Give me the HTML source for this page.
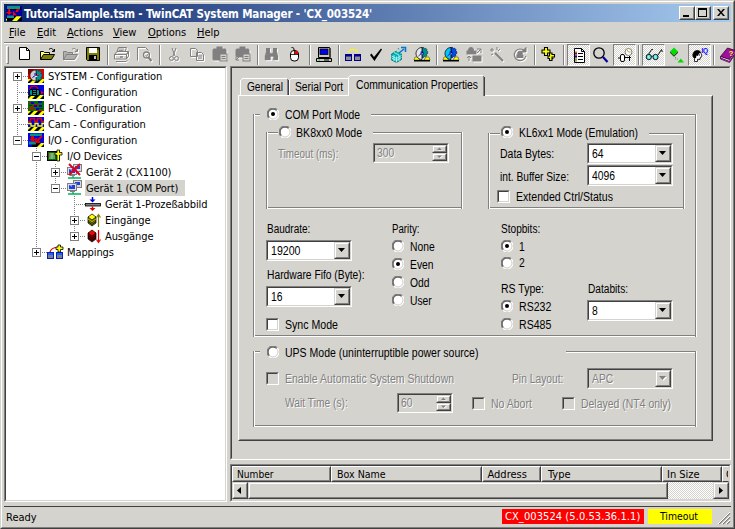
<!DOCTYPE html><html><head><meta charset="utf-8"><title>TwinCAT System Manager</title><style>
*{box-sizing:border-box;margin:0;padding:0}
html,body{width:735px;height:529px;overflow:hidden;background:#d5d3ce}
body{position:relative;font-family:"Liberation Sans",sans-serif;color:#000}
.a{position:absolute}
.ms{position:absolute;white-space:nowrap;font:12px/14px "Liberation Sans",sans-serif;transform:scaleX(.89);transform-origin:0 0}
.dis{color:#808080;text-shadow:1px 1px 0 #fff}
.th{position:absolute;white-space:nowrap;font:11px/13px "DejaVu Sans Condensed","Liberation Sans",sans-serif}
.th u{text-decoration:underline;text-decoration-thickness:1px;text-underline-offset:1px}
.hl{position:absolute;height:2px;border-top:1px solid #808080;border-bottom:1px solid #fff}
.vl{position:absolute;width:2px;border-left:1px solid #808080;border-right:1px solid #fff}
.sunk{position:absolute;border:1px solid;border-color:#808080 #fff #fff #808080}
.sunk>i{position:absolute;left:0;top:0;right:0;bottom:0;border:1px solid;border-color:#404040 #d5d3ce #d5d3ce #404040}
.btn{position:absolute;background:#d5d3ce;border:1px solid;border-color:#fff #404040 #404040 #fff}
.btn>i{position:absolute;left:0;top:0;right:0;bottom:0;border:1px solid;border-color:#d5d3ce #808080 #808080 #d5d3ce}
.btn2{position:absolute;background:#d5d3ce;border:1px solid;border-color:#d5d3ce #404040 #404040 #d5d3ce}
.btn2>i{position:absolute;left:0;top:0;right:0;bottom:0;border:1px solid;border-color:#fff #808080 #808080 #fff}
.rad{position:absolute;width:12px;height:12px}
.chk{position:absolute;width:13px;height:13px;background:#fff;border:1px solid;border-color:#808080 #fff #fff #808080}
.chk>i{position:absolute;left:0;top:0;right:0;bottom:0;border:1px solid;border-color:#404040 #d5d3ce #d5d3ce #404040}
.chk.d{background:#d5d3ce}
.cb{position:absolute;background:#fff;height:21px}
.cb.d{background:#d5d3ce}
.dot-h{position:absolute;height:1px;background-image:repeating-linear-gradient(90deg,#808080 0 1px,transparent 1px 2px)}
.dot-v{position:absolute;width:1px;background-image:repeating-linear-gradient(180deg,#808080 0 1px,transparent 1px 2px)}
.pm{position:absolute;width:9px;height:9px;border:1px solid #808080;background:#fff}
.pm:before{content:"";position:absolute;left:1px;top:3px;width:5px;height:1px;background:#000}
.pm.p:after{content:"";position:absolute;left:3px;top:1px;width:1px;height:5px;background:#000}
.tb{position:absolute;width:23px;height:22px;top:44px}
.tb.on{border:1px solid;border-color:#808080 #fff #fff #808080;background-image:repeating-conic-gradient(#fff 0 25%,#d5d3ce 0 50%);background-size:2px 2px}
.tb svg{position:absolute;left:3px;top:3px;width:16px;height:16px;overflow:visible}
.sep{position:absolute;top:45px;width:2px;height:20px;border-left:1px solid #808080;border-right:1px solid #fff}
svg{display:block}
</style></head><body>
<div class="a" style="left:0;top:0;width:735px;height:529px;border:1px solid;border-color:#d5d3ce #404040 #404040 #d5d3ce"></div>
<div class="a" style="left:1px;top:1px;width:733px;height:527px;border:1px solid;border-color:#fff #808080 #808080 #fff"></div>
<div class="a" style="left:4px;top:4px;width:727px;height:18px;background:linear-gradient(90deg,#0a246a,#a6caf0)"></div>
<svg class="a" style="left:6px;top:6px" width="16" height="15" viewBox="0 0 16 15"><rect width="16" height="15" fill="#0000a0"/><path d="M0 12h16v3H0z" fill="#000"/><rect x="2" y="1" width="13" height="3" fill="#000"/><rect x="1" y="0" width="13" height="3" fill="#109090"/><rect x="2" y="10" width="7" height="3" fill="#000"/><rect x="1" y="9.500" width="7" height="2.500" fill="#109090"/><path d="M2.300 3h1.900v3H6L3.200 9 0 6h2.300z" fill="#ff0000"/><path d="M10.500 3.300h3.700L11.500 6h-2zM7 5l4 4.300H7z" fill="#ff0000"/><path d="M10.500 10.300h5L11 15H6z" fill="#ffff00"/><path d="M0 12.500l1 .5v1.500l-1 .3z" fill="#ffff00"/></svg>
<div id="ttl" class="a" style="left:24px;top:6px;white-space:nowrap;color:#fff;font:bold 11.500px/16px 'DejaVu Sans Condensed','Liberation Sans',sans-serif;letter-spacing:-.14px">TutorialSample.tsm - TwinCAT System Manager - 'CX_003524'</div>
<div class="btn" style="left:679px;top:6px;width:16px;height:14px"><i></i><svg class="a" style="left:3px;top:8px" width="6" height="2"><rect width="6" height="2" fill="#000"/></svg></div>
<div class="btn" style="left:695px;top:6px;width:16px;height:14px"><i></i><svg class="a" style="left:2px;top:1px" width="9" height="9"><path d="M0 0h9v9H0zM1 2v6h7V2z" fill="#000" fill-rule="evenodd"/></svg></div>
<div class="btn" style="left:713px;top:6px;width:16px;height:14px"><i></i><svg class="a" style="left:3px;top:2px" width="8" height="7"><path d="M0 0h2l2 2.5L6 0h2L5 3.5 8 7H6L4 4.5 2 7H0l3-3.500z" fill="#000"/></svg></div>
<div class="th" style="left:9px;top:26px"><u>F</u>ile</div>
<div class="th" style="left:37px;top:26px"><u>E</u>dit</div>
<div class="th" style="left:67px;top:26px"><u>A</u>ctions</div>
<div class="th" style="left:113px;top:26px"><u>V</u>iew</div>
<div class="th" style="left:148px;top:26px"><u>O</u>ptions</div>
<div class="th" style="left:197px;top:26px"><u>H</u>elp</div>
<div class="hl" style="left:4px;top:42px;width:727px"></div>
<div class="a" style="left:6px;top:46px;width:3px;height:18px;border:1px solid;border-color:#fff #808080 #808080 #fff"></div>
<div class="tb" style="left:13px"><svg viewBox="0 0 16 16" style="left:3px;top:3px"><path d="M3.500 .5h7l3 3v9h-10z" fill="#fff" stroke="#000"/><path d="M10.500 .5v3h3" fill="none" stroke="#000"/></svg></div>
<div class="tb" style="left:36px"><svg viewBox="0 0 16 16" style="left:3px;top:3px"><g transform="translate(1,0)"><path d="M.5 12.500v-8h3l1 1h5v2" fill="#ffff80" stroke="#000"/><path d="M.5 12.500l3-5h11l-3 5z" fill="#808000" stroke="#000"/><path d="M9 2.500c2-2 4-1 4.500 1.500M14.500 2v2.500H12" fill="none" stroke="#000"/></g></svg></div>
<div class="tb" style="left:59px"><svg viewBox="0 0 16 16" style="left:3px;top:3px"><g transform="translate(1,0)"><g transform="translate(1,1)" fill="#fff" stroke="#fff" color="#fff"><path d="M.5 12.500v-8h3l1 1h5v2M.5 12.500l3-5h11l-3 5z" stroke-width="1" fill-opacity=".6"/><path d="M9 2.500c2-2 4-1 4.500 1.500M14.500 2v2.500H12" fill="none"/></g><g fill="#808080" stroke="#808080" color="#808080"><path d="M.5 12.500v-8h3l1 1h5v2M.5 12.500l3-5h11l-3 5z" stroke-width="1" fill-opacity=".6"/><path d="M9 2.500c2-2 4-1 4.500 1.500M14.500 2v2.500H12" fill="none"/></g></g></svg></div>
<div class="tb" style="left:82px"><svg viewBox="0 0 16 16" style="left:3px;top:3px"><path d="M1.500 .5h13v13h-12l-1-1z" fill="#808000" stroke="#000"/><rect x="4" y="1" width="8" height="5" fill="#fff"/><rect x="4" y="8" width="8" height="5" fill="#000"/><rect x="9" y="9" width="2" height="3" fill="#c0c0c0"/><rect x="12.500" y="1" width="1" height="2" fill="#000"/></svg></div>
<div class="sep" style="left:107px"></div>
<div class="tb" style="left:111px"><svg viewBox="0 0 16 16" style="left:3px;top:3px"><g transform="translate(1,1)" fill="#fff" stroke="#fff" color="#fff"><path d="M4.500 .5h8l-1.500 4h-8z" fill="none"/><path d="M5 2h5M4.500 3.500h5" fill="none" stroke-width=".8"/><path d="M.5 7.500l2.500-3h11.500l-2 3z" fill="none"/><path d="M.5 7.500h12v4.500h-12zM12.500 7.500l2-3v4.500l-2 3" fill="none"/><path d="M6 10h3" stroke-width="1.500"/><path d="M2 14.500h10l2-2" fill="none"/></g><g fill="#808080" stroke="#808080" color="#808080"><path d="M4.500 .5h8l-1.500 4h-8z" fill="none"/><path d="M5 2h5M4.500 3.500h5" fill="none" stroke-width=".8"/><path d="M.5 7.500l2.500-3h11.500l-2 3z" fill="none"/><path d="M.5 7.500h12v4.500h-12zM12.500 7.500l2-3v4.500l-2 3" fill="none"/><path d="M6 10h3" stroke-width="1.500"/><path d="M2 14.500h10l2-2" fill="none"/></g></svg></div>
<div class="tb" style="left:134px"><svg viewBox="0 0 16 16" style="left:3px;top:3px"><g transform="translate(1,1)" fill="#fff" stroke="#fff" color="#fff"><path d="M.5 13.500v-13h8l3 3" fill="none"/><circle cx="9.500" cy="8" r="3" fill="none" stroke-width="1.300"/><path d="M11.500 10.500l3 3.500" stroke-width="2"/><path d="M8.500 8l1 1.500 1.500-2.500" fill="none" stroke-width=".7"/></g><g fill="#808080" stroke="#808080" color="#808080"><path d="M.5 13.500v-13h8l3 3" fill="none"/><circle cx="9.500" cy="8" r="3" fill="none" stroke-width="1.300"/><path d="M11.500 10.500l3 3.500" stroke-width="2"/><path d="M8.500 8l1 1.500 1.500-2.500" fill="none" stroke-width=".7"/></g></svg></div>
<div class="sep" style="left:159px"></div>
<div class="tb" style="left:163px"><svg viewBox="0 0 16 16" style="left:3px;top:3px"><g transform="translate(1,1)" fill="#fff" stroke="#fff" color="#fff"><path d="M6 1l3 8M10 1L7 9" fill="none"/><circle cx="5.500" cy="11.500" r="2" fill="none"/><circle cx="10.500" cy="11.500" r="2" fill="none"/></g><g fill="#808080" stroke="#808080" color="#808080"><path d="M6 1l3 8M10 1L7 9" fill="none"/><circle cx="5.500" cy="11.500" r="2" fill="none"/><circle cx="10.500" cy="11.500" r="2" fill="none"/></g></svg></div>
<div class="tb" style="left:186px"><svg viewBox="0 0 16 16" style="left:3px;top:3px"><g transform="translate(1,1)" fill="#fff" stroke="#fff" color="#fff"><path d="M1.500 1.500h5l2 2v6h-7z" fill="none"/><path d="M7.500 5.500h5l2 2v6h-7z" fill="none"/><path d="M9 9h4M9 11h4" /></g><g fill="#808080" stroke="#808080" color="#808080"><path d="M1.500 1.500h5l2 2v6h-7z" fill="none"/><path d="M7.500 5.500h5l2 2v6h-7z" fill="none"/><path d="M9 9h4M9 11h4" /></g></svg></div>
<div class="tb" style="left:209px"><svg viewBox="0 0 16 16" style="left:3px;top:3px"><g transform="translate(1,1)" fill="#fff" stroke="#fff" color="#fff"><rect x="1" y="2" width="13" height="11" rx="1"/><rect x="5" y="0" width="5" height="3"/></g><g fill="#808080" stroke="#808080" color="#808080"><rect x="1" y="2" width="13" height="11" rx="1"/><rect x="5" y="0" width="5" height="3"/></g><rect x="8" y="7" width="7" height="7" fill="#d5d3ce" stroke="#808080"/><path d="M9.500 9.500h4M9.500 11.500h4" stroke="#808080"/></svg></div>
<div class="tb" style="left:232px"><svg viewBox="0 0 16 16" style="left:3px;top:3px"><g transform="translate(1,1)" fill="#fff" stroke="#fff" color="#fff"><rect x="1" y="2" width="13" height="8" rx="1"/><rect x="5" y="0" width="5" height="3"/></g><g fill="#808080" stroke="#808080" color="#808080"><rect x="1" y="2" width="13" height="8" rx="1"/><rect x="5" y="0" width="5" height="3"/></g><rect x="8" y="7" width="7" height="7" fill="#d5d3ce" stroke="#808080"/><path d="M9.500 9.500h4M9.500 11.500h4" stroke="#808080"/><path d="M1 13l4-4M1 10v3h3" stroke="#808080" fill="none"/></svg></div>
<div class="sep" style="left:257px"></div>
<div class="tb" style="left:261px"><svg viewBox="0 0 16 16" style="left:3px;top:3px"><g transform="translate(1,1)" fill="#fff" stroke="#fff" color="#fff"><path d="M1 13V9l1.500-5h3l1 2.500h2l1-2.500h3L14 9v4h-4.500V9.500h-3V13z" stroke-width=".4"/><rect x="2.500" y="1.500" width="3" height="2.500"/><rect x="9.500" y="1.500" width="3" height="2.500"/></g><g fill="#808080" stroke="#808080" color="#808080"><path d="M1 13V9l1.500-5h3l1 2.500h2l1-2.500h3L14 9v4h-4.500V9.500h-3V13z" stroke-width=".4"/><rect x="2.500" y="1.500" width="3" height="2.500"/><rect x="9.500" y="1.500" width="3" height="2.500"/></g></svg></div>
<div class="tb" style="left:284px"><svg viewBox="0 0 16 16" style="left:3px;top:3px"><path d="M7 3.500V2c0-1-1-1.500-2.500-1.500" fill="none" stroke="#000"/><rect x="3.500" y="3.500" width="8" height="10.500" rx="3.500" fill="#fff" stroke="#000"/><path d="M7.500 3.500v4M3.500 7.500h8" fill="none" stroke="#000" stroke-width=".8"/><rect x="8" y="4" width="3" height="3" fill="#f00000"/></svg></div>
<div class="sep" style="left:309px"></div>
<div class="tb" style="left:313px"><svg viewBox="0 0 16 16" style="left:3px;top:3px"><path d="M2.500 .5h11v10h-11z" fill="#c8c8c8" stroke="#000"/><path d="M13.500 .5l1 1v9l-1 0" fill="#808080" stroke="#000" stroke-width=".6"/><rect x="4" y="2" width="8" height="5.500" fill="#0000e8" stroke="#000" stroke-width=".8"/><path d="M.5 11.500h15v3H.5z" fill="#c8c8c8" stroke="#000"/><path d="M8 13h5" stroke="#000"/><rect x="2.500" y="12.500" width="1.500" height="1" fill="#00d000"/></svg></div>
<div class="sep" style="left:338px"></div>
<div class="tb" style="left:342px"><svg viewBox="0 0 16 16" style="left:3px;top:3px"><path d="M3.500 5.500c1-4 8-4 9 0" fill="none" stroke="#ffff00" stroke-width="1.400" stroke-dasharray="2 .6"/><rect x=".5" y="7.500" width="6" height="6" fill="#909090" stroke="#000090"/><rect x="9.500" y="7.500" width="6" height="6" fill="#909090" stroke="#000090"/><rect x="1" y="8" width="5" height="1.500" fill="#000090"/><rect x="10" y="8" width="5" height="1.500" fill="#000090"/></svg></div>
<div class="tb" style="left:365px"><svg viewBox="0 0 16 16" style="left:3px;top:3px"><path d="M2 8l1.500-1.500L6 10 13 1.500l1 1L6.500 14z" fill="#000"/></svg></div>
<div class="tb" style="left:388px"><svg viewBox="0 0 16 16" style="left:3px;top:3px"><path d="M.5 7l5-3 5 2.500v6l-5 3-5-2.500z" fill="#00b0b0" stroke="#006868" stroke-width=".7"/><path d="M.5 9l5 2.500 5-3M.5 11l5 2.500 5-3M3 5.500l5 2.500v6M5.500 4l5 2.500M3 8v6M5.500 9.500v6" stroke="#c8ffff" fill="none" stroke-width=".8"/><path d="M8 6l5-4M10 .5h4.500V5" stroke="#0078d0" stroke-width="1.600" fill="none"/><path d="M7 1l1 1.500M11 3" stroke="#00a0a0"/></svg></div>
<div class="tb" style="left:411px"><svg viewBox="0 0 16 16" style="left:3px;top:3px"><path d="M0 13h16v1.500H0z" fill="#000"/><path d="M0 13l1-3h3l2 3zM10 13l2-3h3l1 3z" fill="#ffff00" stroke="#000" stroke-width=".4"/><path d="M8 .5h1.800l.5 1.300 1.400-.6 1.300 1.300-.6 1.400 1.300.5v2.200l-1.300.5.600 1.400-1.300 1.300-1.400-.6-.5 1.300H8z" fill="#009090" stroke="#003030" stroke-width=".6"/><path d="M8 .5C4.500 .5 2 3.500 2 6.500S4.500 12.500 8 12.500z" fill="#e8e8e8" stroke="#000" stroke-width=".8"/><circle cx="8" cy="6.500" r="1.300" fill="#fff" stroke="#000" stroke-width=".5"/><path d="M4.500 9l4.500-4M6.500 5h2.500v2.500" stroke="#0000c0" fill="none" stroke-width=".9"/></svg></div>
<div class="sep" style="left:436px"></div>
<div class="tb" style="left:440px"><svg viewBox="0 0 16 16" style="left:3px;top:3px"><path d="M0 13h16v1.500H0z" fill="#000"/><path d="M0 13l1-3h3l2 3zM10 13l2-3h3l1 3z" fill="#ffff00" stroke="#000" stroke-width=".4"/><path d="M8 .5h1.800l.5 1.300 1.400-.6 1.300 1.300-.6 1.400 1.300.5v2.200l-1.300.5.600 1.400-1.300 1.300-1.400-.6-.5 1.300H8z" fill="#0050e0" stroke="#000060" stroke-width=".6"/><path d="M8 .5C4.500 .5 2 3.500 2 6.500S4.500 12.500 8 12.500z" fill="#00c8ff" stroke="#000" stroke-width=".8"/><circle cx="8" cy="6.500" r="1.300" fill="#fff" stroke="#000" stroke-width=".5"/><path d="M4.500 9l4.500-4M6.500 5h2.500v2.500" stroke="#0000c0" fill="none" stroke-width=".9"/></svg></div>
<div class="tb" style="left:463px"><svg viewBox="0 0 16 16" style="left:3px;top:3px"><g transform="translate(1,1)" fill="#fff" stroke="#fff" color="#fff"><circle cx="5" cy="3" r="2.500"/><rect x="1" y="4" width="9" height="3"/><path d="M11 2h4v4M15 2l-4 4" fill="none"/><rect x="7" y="9" width="8" height="5"/><path d="M3 14V9M1 11l2-2 2 2" fill="none"/></g><g fill="#808080" stroke="#808080" color="#808080"><circle cx="5" cy="3" r="2.500"/><rect x="1" y="4" width="9" height="3"/><path d="M11 2h4v4M15 2l-4 4" fill="none"/><rect x="7" y="9" width="8" height="5"/><path d="M3 14V9M1 11l2-2 2 2" fill="none"/></g></svg></div>
<div class="tb" style="left:486px"><svg viewBox="0 0 16 16" style="left:3px;top:3px"><g transform="translate(1,1)" fill="#fff" stroke="#fff" color="#fff"><path d="M6 6l8 8" stroke-width="2"/><path d="M3 1v4M1 3h4M8 0v3M11 2l-2 2M2 8l2-1" fill="none"/></g><g fill="#808080" stroke="#808080" color="#808080"><path d="M6 6l8 8" stroke-width="2"/><path d="M3 1v4M1 3h4M8 0v3M11 2l-2 2M2 8l2-1" fill="none"/></g></svg></div>
<div class="tb" style="left:509px"><svg viewBox="0 0 16 16" style="left:3px;top:3px"><g transform="translate(1,1)" fill="#fff" stroke="#fff" color="#fff"><path d="M12.500 4A5.800 5.800 0 1 0 13.800 9" fill="none" stroke-width="1.200"/><path d="M14 .5v4.500H9.500z"/><circle cx="8" cy="6.500" r="2.300"/><rect x="5" y="8" width="6" height="2.500"/></g><g fill="#808080" stroke="#808080" color="#808080"><path d="M12.500 4A5.800 5.800 0 1 0 13.800 9" fill="none" stroke-width="1.200"/><path d="M14 .5v4.500H9.500z"/><circle cx="8" cy="6.500" r="2.300"/><rect x="5" y="8" width="6" height="2.500"/></g></svg></div>
<div class="sep" style="left:534px"></div>
<div class="tb" style="left:538px"><svg viewBox="0 0 16 16" style="left:3px;top:3px"><path d="M3.500 .5h3v2.500h2.500v3H6.500v2.500h-3V6H1V3h2.500z" fill="#ffff00" stroke="#000" stroke-width="1.100"/><path d="M8.500 6h2.500v1.500h2.500V10H11v1.500h1.500-1.500v2H8.500v-2H7V9h1.500z" fill="#ffff00" stroke="#000" stroke-width="1.100"/></svg></div>
<div class="sep" style="left:563px"></div>
<div class="tb on" style="left:567px"><svg viewBox="0 0 16 16" style="left:3px;top:3px"><path d="M3.500 .5h7l3 3v11h-10z" fill="#fff" stroke="#000"/><path d="M10.500 .5v3h3" fill="none" stroke="#000"/><path d="M7 5.500h5M7 8.500h5M7 11.500h5" stroke="#000"/><rect x="4" y="4.500" width="2" height="2" fill="#f00"/><rect x="4" y="7.500" width="2" height="2" fill="#00f"/><rect x="4" y="10.500" width="2" height="2" fill="#e0c000"/><path d="M5 3v11" stroke="#000" stroke-width=".5"/></svg></div>
<div class="tb" style="left:590px"><svg viewBox="0 0 16 16" style="left:3px;top:3px"><circle cx="6" cy="6" r="5.200" fill="none" stroke="#000" stroke-width="1.300"/><path d="M10 10l4.500 5" stroke="#0000a0" stroke-width="2.200"/></svg></div>
<div class="tb on" style="left:613px"><svg viewBox="0 0 16 16" style="left:3px;top:3px"><circle cx="11.500" cy="4" r="3.500" fill="#fff" stroke="#808080"/><path d="M11.500 4l-1.500-2M11.500 4h2" stroke="#c0a000" fill="none"/><path d="M3 9.500h11M12.500 8v5" stroke="#000" fill="none"/><rect x="3.500" y="6.500" width="4" height="7" rx="1.500" fill="#fff" stroke="#000"/><path d="M1 10h2" stroke="#000"/></svg></div>
<div class="sep" style="left:638px"></div>
<div class="tb on" style="left:642px"><svg viewBox="0 0 16 16" style="left:3px;top:3px"><path d="M2 7l4-6 .8 .8M12 7l3.500-5.500 .8 2.500" fill="none" stroke="#000" stroke-width=".9"/><ellipse cx="2.800" cy="9" rx="2.600" ry="2.700" fill="#60e8e8" stroke="#000" stroke-width=".9"/><ellipse cx="9.500" cy="9" rx="2.600" ry="2.700" fill="#60e8e8" stroke="#000" stroke-width=".9"/><path d="M5.400 8.500c.5-.7 1-.7 1.500 0" stroke="#000" fill="none" stroke-width=".8"/><path d="M2 8.500l1.500 1M8.700 8.500l1.500 1" stroke="#fff" stroke-width=".7"/></svg></div>
<div class="tb" style="left:665px"><svg viewBox="0 0 16 16" style="left:3px;top:3px"><path d="M2 4.500L6 .5l4 4-4 4z" fill="#00e000"/><path d="M2 4.500l4 4 4-4v1.200l-4 4-4-4z" fill="#004000"/><path d="M7 10.500h1M9 12h1M7 12h1" stroke="#808080"/><path d="M9.500 15.500l3.300-4 3.200 4z" fill="#00e000"/></svg></div>
<div class="tb on" style="left:688px"><svg viewBox="0 0 16 16" style="left:3px;top:3px"><path d="M2.500 13.500v-3C1 9 .5 7.500 1 6c.5-2.500 2.500-3.500 4.500-3.500S9 4 9 5.500l1 2.500-1 .5v1l-1 .3V11.500l-2.500-.3v2.300z" fill="#fff" stroke="#000" stroke-width=".8"/><path d="M2.500 10.500C1 9 .5 7.500 1 6c.5-2.500 2.500-3.500 4.500-3.500 1.800 0 3 1 3.300 2.200L7 5.500 6 8 4.500 7.500 4 10z" fill="#000"/><path d="M7 7h1" stroke="#000"/><text x="9.500" y="4.500" font-family="Liberation Sans,sans-serif" font-weight="bold" font-size="6.500" fill="#0000ff" letter-spacing="-.3">IQ</text></svg></div>
<div class="sep" style="left:713px"></div>
<div class="tb" style="left:717px"><svg viewBox="0 0 16 16" style="left:3px;top:3px"><path d="M.5 9.500L7.500 1l8 2.500-6 9z" fill="#a010a0" stroke="#300030" stroke-width=".8"/><path d="M.5 9.500v2.500l9 3.500 6-9V3.500l-6 9z" fill="#fff" stroke="#300030" stroke-width=".8"/><path d="M.5 11l9 3.500 6-9" fill="none" stroke="#800080" stroke-width="1.200"/><text x="8.500" y="8.500" font-family="Liberation Sans,sans-serif" font-weight="bold" font-size="8" fill="#ffff00">?</text></svg></div>
<div class="sunk" style="left:4px;top:66px;width:223px;height:436px;background:#fff"><i></i></div>
<div class="dot-v" style="left:17px;top:76px;height:65px"></div>
<div class="dot-v" style="left:36px;top:148px;height:105px"></div>
<div class="dot-v" style="left:55px;top:164px;height:25px"></div>
<div class="dot-v" style="left:74px;top:196px;height:41px"></div>
<div class="dot-h" style="left:19px;top:76px;width:9px"></div>
<div class="pm p" style="left:13px;top:72px"></div>
<svg class="a" style="left:28px;top:69px;overflow:visible" width="16" height="16" viewBox="0 0 16 16"><rect width="16" height="14" fill="#e00000"/><path d="M0 0h6L0 6z" fill="#800000"/><path d="M0 10h16v4H0z" fill="#000"/><path d="M0 10h3l-3 3zM2 14l4-4h4l-4 4zM10 14l4-4h2v2l-2 2z" fill="#ffff00"/><path d="M8 1h2l.5 1.500 1.500-.8 1.500 1.500-.8 1.500 1.500.5v2.600l-1.500.5.800 1.500-1.500 1.500-1.500-.8L10 12H8z" fill="#009090" stroke="#004040" stroke-width=".5"/><path d="M8 1C4 1 2 4 2 6.500S4 12 8 12z" fill="#d0d0d0" stroke="#000" stroke-width=".6"/><circle cx="8" cy="6.500" r="1.500" fill="#fff"/><path d="M4.500 8.500l4-3M6 5h2.500v2" stroke="#0000c0" fill="none" stroke-width="1"/><path d="M8 6.500h3" stroke="#e00000"/></svg>
<div class="th" style="left:48px;top:70px;letter-spacing:-.1px">SYSTEM - Configuration</div>
<div class="dot-h" style="left:19px;top:92px;width:9px"></div>
<svg class="a" style="left:28px;top:85px;overflow:visible" width="16" height="16" viewBox="0 0 16 16"><rect width="16" height="14" fill="#0000e0"/><path d="M0 10h16v4H0z" fill="#000"/><path d="M0 10h1l-1 1zM0 14l4-4h4l-4 4zM8 14l4-4h4l-4 4z" fill="#ffff00"/><path d="M2 4c1-4 7-4 8 0" stroke="#e00000" fill="none" stroke-width="1.200"/><path d="M1 4l1.500 1.500M2.500 2.500" stroke="#e00000"/><rect x="1.500" y="4.500" width="10" height="6" rx="1.500" fill="#009090" stroke="#000"/><path d="M4.500 4.500v6M8.500 4.500v6M4.500 6.500h4M4.500 8.500h4" stroke="#000" fill="none"/><path d="M12 7.500h1.500" stroke="#000"/><path d="M13 5.500l3 2-3 2z" fill="#e00000"/></svg>
<div class="th" style="left:48px;top:86px;letter-spacing:-.1px">NC - Configuration</div>
<div class="dot-h" style="left:19px;top:108px;width:9px"></div>
<div class="pm p" style="left:13px;top:104px"></div>
<svg class="a" style="left:28px;top:101px;overflow:visible" width="16" height="16" viewBox="0 0 16 16"><rect width="16" height="14" fill="#007000"/><path d="M0 10h16v4H0z" fill="#000"/><path d="M0 10h3l-3 3zM2 14l4-4h4l-4 4zM10 14l4-4h2v2l-2 2z" fill="#ffff00"/><path d="M3 1h3v2H3zM10 0h4v2h-4zM6 4h3v2H6zM11 4h3v2h-3zM8 7h3v2H8z" fill="#0000e0"/><path d="M1 2h2M5 3.500h6M2 6.500h4M1 8h6M9 9.500h6" stroke="#e00000" fill="none"/><path d="M1 4.500h3M11 7.500h4" stroke="#004000"/></svg>
<div class="th" style="left:48px;top:102px;letter-spacing:-.1px">PLC - Configuration</div>
<div class="dot-h" style="left:19px;top:124px;width:9px"></div>
<svg class="a" style="left:28px;top:117px;overflow:visible" width="16" height="16" viewBox="0 0 16 16"><rect width="16" height="14" fill="#0000e0"/><path d="M0 10h16v4H0z" fill="#000"/><path d="M0 10h3l-3 3zM2 14l4-4h4l-4 4zM10 14l4-4h2v2l-2 2z" fill="#ffff00"/><path d="M0 4.500h2.500v-3h4v3h3v-3h4v3H16" stroke="#e00000" fill="none" stroke-width="1.300"/><path d="M0 6.500h3v2.500h4V6.500h3v2.500h4V6.500h2" stroke="#ffff00" fill="none" stroke-width="1.300"/></svg>
<div class="th" style="left:48px;top:118px;letter-spacing:-.1px">Cam - Configuration</div>
<div class="dot-h" style="left:19px;top:140px;width:9px"></div>
<div class="pm " style="left:13px;top:136px"></div>
<svg class="a" style="left:28px;top:133px;overflow:visible" width="16" height="16" viewBox="0 0 16 16"><rect width="16" height="14" fill="#0000e0"/><path d="M4 10h12v4H4z" fill="#000"/><path d="M9 14l4-4h3v1l-3 3z" fill="#ffff00"/><rect x="2" y="0.500" width="12" height="2.500" fill="#009090"/><rect x="1" y="8.500" width="7" height="3" fill="#009090"/><path d="M3 3h3v3h2L4.500 9 1 6h2z" fill="#e00000"/><path d="M14 3L9 8M8 5v4h4" stroke="#e00000" stroke-width="1.800" fill="none"/></svg>
<div class="th" style="left:48px;top:134px;letter-spacing:-.1px">I/O - Configuration</div>
<div class="dot-h" style="left:38px;top:156px;width:9px"></div>
<div class="pm " style="left:32px;top:152px"></div>
<svg class="a" style="left:47px;top:148px;overflow:visible" width="16" height="16" viewBox="0 0 16 16"><rect x=".5" y="3.500" width="12" height="9" fill="#007000" stroke="#000"/><path d="M2 6h6M2 8h6M2 10h6" stroke="#d0d0d0"/><path d="M1.500 6h1M1.500 8h1" stroke="#e00000"/><path d="M5 5v6" stroke="#d0d0d0" stroke-width=".6"/><path d="M10 2h2.500v2.500H15V7h-2.500v6H10V7H8V4.500h2z" fill="#ffff00" stroke="#000" stroke-width=".8"/></svg>
<div class="th" style="left:67px;top:150px;letter-spacing:-.1px">I/O Devices</div>
<div class="dot-h" style="left:57px;top:172px;width:9px"></div>
<div class="pm p" style="left:51px;top:168px"></div>
<svg class="a" style="left:67px;top:164px;overflow:visible" width="16" height="16" viewBox="0 0 16 16"><rect x="6.500" y=".5" width="8" height="7" fill="#d8d8d8" stroke="#808080"/><rect x="8" y="2" width="5" height="3" fill="#2040e0"/><rect x=".5" y="3.500" width="9" height="7" fill="#e0e0e0" stroke="#808080"/><rect x="2" y="5" width="6" height="4" fill="#2040e0"/><path d="M2 5h3v2z" fill="#80a0ff"/><rect x="3" y="11" width="5" height="1" fill="#808080"/><path d="M6 12v2M1 14h13" stroke="#00b060" stroke-width="1.400"/><path d="M2 0l11 11M13 0L2 11" stroke="#e00020" stroke-width="2"/></svg>
<div class="th" style="left:86px;top:166px;letter-spacing:-.1px">Gerät 2 (CX1100)</div>
<div class="dot-h" style="left:57px;top:188px;width:9px"></div>
<div class="pm " style="left:51px;top:184px"></div>
<svg class="a" style="left:67px;top:180px;overflow:visible" width="16" height="16" viewBox="0 0 16 16"><rect x="6.500" y=".5" width="8" height="7" fill="#d8d8d8" stroke="#808080"/><rect x="8" y="2" width="5" height="3" fill="#2040e0"/><rect x=".5" y="3.500" width="9" height="7" fill="#e0e0e0" stroke="#808080"/><rect x="2" y="5" width="6" height="4" fill="#2040e0"/><path d="M2 5h3v2z" fill="#80a0ff"/><rect x="3" y="11" width="5" height="1" fill="#808080"/><path d="M6 12v2M1 14h13" stroke="#00b060" stroke-width="1.400"/></svg>
<div class="a" style="left:85px;top:180px;width:100px;height:16px;background:#d5d3ce"></div>
<div class="th" style="left:86px;top:182px;letter-spacing:-.1px">Gerät 1 (COM Port)</div>
<div class="dot-h" style="left:76px;top:204px;width:9px"></div>
<svg class="a" style="left:85px;top:197px;overflow:visible" width="16" height="16" viewBox="0 0 16 16"><rect x=".5" y="6.500" width="15" height="2.500" fill="#808080" stroke="#000" stroke-width=".8"/><path d="M7.500 0v3" stroke="#0000e0" stroke-width="1.500"/><path d="M4.500 2.500h6l-3 3z" fill="#0000e0"/><path d="M7.500 9.500v2" stroke="#e00000" stroke-width="1.500"/><path d="M4.500 11h6l-3 3z" fill="#e00000"/></svg>
<div class="th" style="left:105px;top:198px;letter-spacing:-.1px">Gerät 1-Prozeßabbild</div>
<div class="dot-h" style="left:76px;top:220px;width:9px"></div>
<div class="pm p" style="left:70px;top:216px"></div>
<svg class="a" style="left:85px;top:213px;overflow:visible" width="16" height="16" viewBox="0 0 16 16"><path d="M3 4v6l4 3 4-3V4z" fill="#808000" stroke="#000" stroke-width=".7"/><path d="M3 4l4-3 4 3-4 3z" fill="#ffff00" stroke="#000" stroke-width=".7"/><path d="M3 6.500l4 3 4-3M3 8.500l4 3 4-3" stroke="#000" fill="none" stroke-width=".8"/><path d="M3 6l4 3 4-3" stroke="#ffff00" fill="none" stroke-width=".6"/><path d="M13.500 14V2M11.500 4.500l2-3 2 3" stroke="#808000" fill="none" stroke-width="1.200"/></svg>
<div class="th" style="left:105px;top:214px;letter-spacing:-.1px">Eingänge</div>
<div class="dot-h" style="left:76px;top:236px;width:9px"></div>
<div class="pm p" style="left:70px;top:232px"></div>
<svg class="a" style="left:85px;top:229px;overflow:visible" width="16" height="16" viewBox="0 0 16 16"><path d="M3 4v6l4 3 4-3V4z" fill="#800000" stroke="#000" stroke-width=".7"/><path d="M3 4l4-3 4 3-4 3z" fill="#ff0000" stroke="#000" stroke-width=".7"/><path d="M3 6.500l4 3 4-3M3 8.500l4 3 4-3" stroke="#000" fill="none" stroke-width=".8"/><path d="M13.500 1v12M11.500 10.500l2 3 2-3" stroke="#e00000" fill="none" stroke-width="1.200"/></svg>
<div class="th" style="left:105px;top:230px;letter-spacing:-.1px">Ausgänge</div>
<div class="dot-h" style="left:38px;top:252px;width:9px"></div>
<div class="pm p" style="left:32px;top:248px"></div>
<svg class="a" style="left:47px;top:244px;overflow:visible" width="16" height="16" viewBox="0 0 16 16"><rect x=".5" y="8.500" width="6" height="6" fill="#808080" stroke="#0020c0"/><rect x="9.500" y="8.500" width="6" height="6" fill="#808080" stroke="#0020c0"/><rect x="1" y="9" width="5" height="2" fill="#2060ff"/><rect x="10" y="9" width="5" height="2" fill="#2060ff"/><path d="M3 8c1-3 4-4.500 7-4.500" stroke="#e00000" fill="none" stroke-width="1.200"/><path d="M11 1h2.500v2H16v2.500h-2.500V8H11V5.500H9V3h2z" fill="#ffff00" stroke="#000" stroke-width=".8"/></svg>
<div class="th" style="left:67px;top:246px;letter-spacing:-.1px">Mappings</div>
<div class="sunk" style="left:230px;top:66px;width:501px;height:394px"><i></i></div>
<div class="a" style="left:238px;top:95px;width:475px;height:346px;border:1px solid;border-color:#fff #404040 #404040 #fff"></div>
<div class="a" style="left:239px;top:96px;width:473px;height:344px;border:1px solid;border-color:#d5d3ce #808080 #808080 #d5d3ce"></div>
<div class="a" style="left:240px;top:78px;width:49px;height:17px;background:#d5d3ce"></div>
<div class="a" style="left:240px;top:80px;width:1px;height:15px;background:#fff"></div>
<div class="a" style="left:241px;top:79px;width:1px;height:1px;background:#fff"></div>
<div class="a" style="left:242px;top:78px;width:45px;height:1px;background:#fff"></div>
<div class="a" style="left:287px;top:79px;width:1px;height:16px;background:#808080"></div>
<div class="a" style="left:288px;top:80px;width:1px;height:15px;background:#404040"></div>
<div class="a" style="left:289px;top:78px;width:61px;height:17px;background:#d5d3ce"></div>
<div class="a" style="left:289px;top:80px;width:1px;height:15px;background:#fff"></div>
<div class="a" style="left:290px;top:79px;width:1px;height:1px;background:#fff"></div>
<div class="a" style="left:291px;top:78px;width:57px;height:1px;background:#fff"></div>
<div class="a" style="left:348px;top:79px;width:1px;height:16px;background:#808080"></div>
<div class="a" style="left:349px;top:80px;width:1px;height:15px;background:#404040"></div>
<div class="a" style="left:348px;top:75px;width:137px;height:21px;background:#d5d3ce"></div>
<div class="a" style="left:348px;top:77px;width:1px;height:19px;background:#fff"></div>
<div class="a" style="left:349px;top:76px;width:1px;height:1px;background:#fff"></div>
<div class="a" style="left:350px;top:75px;width:133px;height:1px;background:#fff"></div>
<div class="a" style="left:483px;top:76px;width:1px;height:20px;background:#808080"></div>
<div class="a" style="left:484px;top:77px;width:1px;height:19px;background:#404040"></div>
<div class="ms" style="left:247px;top:80px;transform:scaleX(0.843)">General</div>
<div class="ms" style="left:295px;top:80px;transform:scaleX(0.857)">Serial Port</div>
<div class="ms" style="left:355.5px;top:78px;transform:scaleX(0.863)">Communication Properties</div>
<div class="hl" style="left:253px;top:114px;width:7px"></div>
<div class="hl" style="left:371px;top:114px;width:326px"></div>
<div class="hl" style="left:253px;top:335px;width:444px"></div>
<div class="vl" style="left:253px;top:114px;height:223px"></div>
<div class="vl" style="left:695px;top:114px;height:223px"></div>
<svg class="rad" style="left:267px;top:108px" viewBox="0 0 12 12"><circle cx="6" cy="6" r="5" fill="#fff"/><path d="M10.200 1.800A5.900 5.900 0 0 0 1.800 10.200" fill="none" stroke="#808080" stroke-width="1.100"/><path d="M9.500 2.500A4.900 4.900 0 0 0 2.500 9.500" fill="none" stroke="#404040" stroke-width="1"/><path d="M10.200 1.800A5.900 5.900 0 0 1 1.800 10.200" fill="none" stroke="#fff" stroke-width="1.100"/><path d="M9.500 2.500A4.900 4.900 0 0 1 2.500 9.500" fill="none" stroke="#d5d3ce" stroke-width="1"/><circle cx="6" cy="6" r="2" fill="#000"/></svg>
<div class="ms" style="left:285px;top:108px;transform:scaleX(0.865)">COM Port Mode</div>
<div class="hl" style="left:266px;top:132px;width:12px"></div>
<div class="hl" style="left:373px;top:132px;width:90px"></div>
<div class="hl" style="left:266px;top:207px;width:197px"></div>
<div class="vl" style="left:266px;top:132px;height:77px"></div>
<div class="vl" style="left:461px;top:132px;height:77px"></div>
<svg class="rad" style="left:279px;top:126px" viewBox="0 0 12 12"><circle cx="6" cy="6" r="5" fill="#fff"/><path d="M10.200 1.800A5.900 5.900 0 0 0 1.800 10.200" fill="none" stroke="#808080" stroke-width="1.100"/><path d="M9.500 2.500A4.900 4.900 0 0 0 2.500 9.500" fill="none" stroke="#404040" stroke-width="1"/><path d="M10.200 1.800A5.900 5.900 0 0 1 1.800 10.200" fill="none" stroke="#fff" stroke-width="1.100"/><path d="M9.500 2.500A4.900 4.900 0 0 1 2.500 9.500" fill="none" stroke="#d5d3ce" stroke-width="1"/></svg>
<div class="ms" style="left:296px;top:126px;transform:scaleX(0.886)">BK8xx0 Mode</div>
<div class="ms dis" style="left:278px;top:147px;transform:scaleX(0.821)">Timeout (ms):</div>
<div class="sunk cb d" style="left:373px;top:143px;width:76px;height:20px"><i></i></div>
<div class="btn2" style="left:432px;top:145px;width:15px;height:8px"><i></i></div>
<div class="btn2" style="left:432px;top:153px;width:15px;height:8px"><i></i></div>
<svg class="a" style="left:437px;top:147px" width="6" height="4" viewBox="0 0 6 4"><path d="M1 3.500h5L3.500 1z" fill="#fff"/><path d="M0 3h5L2.500 .5z" fill="#808080"/></svg>
<svg class="a" style="left:437px;top:155px" width="6" height="4" viewBox="0 0 6 4"><path d="M1 1h5L3.500 3.500z" fill="#fff"/><path d="M0 .5h5L2.500 3z" fill="#808080"/></svg>
<div class="ms dis" style="left:377px;top:146px;transform:scaleX(0.86)">300</div>
<div class="hl" style="left:488px;top:133px;width:12px"></div>
<div class="hl" style="left:649px;top:133px;width:36px"></div>
<div class="hl" style="left:488px;top:207px;width:197px"></div>
<div class="vl" style="left:488px;top:133px;height:76px"></div>
<div class="vl" style="left:683px;top:133px;height:76px"></div>
<svg class="rad" style="left:501px;top:126px" viewBox="0 0 12 12"><circle cx="6" cy="6" r="5" fill="#fff"/><path d="M10.200 1.800A5.900 5.900 0 0 0 1.800 10.200" fill="none" stroke="#808080" stroke-width="1.100"/><path d="M9.500 2.500A4.900 4.900 0 0 0 2.500 9.500" fill="none" stroke="#404040" stroke-width="1"/><path d="M10.200 1.800A5.900 5.900 0 0 1 1.800 10.200" fill="none" stroke="#fff" stroke-width="1.100"/><path d="M9.500 2.500A4.900 4.900 0 0 1 2.500 9.500" fill="none" stroke="#d5d3ce" stroke-width="1"/><circle cx="6" cy="6" r="2" fill="#000"/></svg>
<div class="ms" style="left:519px;top:126px;transform:scaleX(0.862)">KL6xx1 Mode (Emulation)</div>
<div class="ms" style="left:500px;top:147px;transform:scaleX(0.875)">Data Bytes:</div>
<div class="sunk cb" style="left:587px;top:143px;width:86px"><i></i></div>
<div class="btn2" style="left:655px;top:145px;width:16px;height:17px"><i></i></div>
<svg class="a" style="left:659px;top:151px" width="9" height="6" viewBox="0 0 9 6"><path d="M0 0h7l-3.500 4z" fill="#000"/></svg>
<div class="ms" style="left:592px;top:147px;transform:scaleX(0.86)">64</div>
<div class="ms" style="left:500px;top:170px;transform:scaleX(0.85)">int. Buffer Size:</div>
<div class="sunk cb" style="left:587px;top:165px;width:86px"><i></i></div>
<div class="btn2" style="left:655px;top:167px;width:16px;height:17px"><i></i></div>
<svg class="a" style="left:659px;top:173px" width="9" height="6" viewBox="0 0 9 6"><path d="M0 0h7l-3.500 4z" fill="#000"/></svg>
<div class="ms" style="left:592px;top:169px;transform:scaleX(0.86)">4096</div>
<div class="chk" style="left:497px;top:190px"><i></i></div>
<div class="ms" style="left:516px;top:190px;transform:scaleX(0.881)">Extended Ctrl/Status</div>
<div class="ms" style="left:267px;top:222px;transform:scaleX(0.832)">Baudrate:</div>
<div class="sunk cb" style="left:266px;top:240px;width:86px"><i></i></div>
<div class="btn2" style="left:334px;top:242px;width:16px;height:17px"><i></i></div>
<svg class="a" style="left:338px;top:248px" width="9" height="6" viewBox="0 0 9 6"><path d="M0 0h7l-3.500 4z" fill="#000"/></svg>
<div class="ms" style="left:271px;top:244px;transform:scaleX(0.884)">19200</div>
<div class="ms" style="left:267px;top:268px;transform:scaleX(0.856)">Hardware Fifo (Byte):</div>
<div class="sunk cb" style="left:266px;top:286px;width:86px"><i></i></div>
<div class="btn2" style="left:334px;top:288px;width:16px;height:17px"><i></i></div>
<svg class="a" style="left:338px;top:294px" width="9" height="6" viewBox="0 0 9 6"><path d="M0 0h7l-3.500 4z" fill="#000"/></svg>
<div class="ms" style="left:271px;top:290px;transform:scaleX(0.86)">16</div>
<div class="chk" style="left:266px;top:318px"><i></i></div>
<div class="ms" style="left:285px;top:318px;transform:scaleX(0.883)">Sync Mode</div>
<div class="ms" style="left:392px;top:222px;transform:scaleX(0.806)">Parity:</div>
<svg class="rad" style="left:392px;top:240px" viewBox="0 0 12 12"><circle cx="6" cy="6" r="5" fill="#fff"/><path d="M10.200 1.800A5.900 5.900 0 0 0 1.800 10.200" fill="none" stroke="#808080" stroke-width="1.100"/><path d="M9.500 2.500A4.900 4.900 0 0 0 2.500 9.500" fill="none" stroke="#404040" stroke-width="1"/><path d="M10.200 1.800A5.900 5.900 0 0 1 1.800 10.200" fill="none" stroke="#fff" stroke-width="1.100"/><path d="M9.500 2.500A4.900 4.900 0 0 1 2.500 9.500" fill="none" stroke="#d5d3ce" stroke-width="1"/></svg>
<div class="ms" style="left:410px;top:240px;transform:scaleX(0.86)">None</div>
<svg class="rad" style="left:392px;top:258px" viewBox="0 0 12 12"><circle cx="6" cy="6" r="5" fill="#fff"/><path d="M10.200 1.800A5.900 5.900 0 0 0 1.800 10.200" fill="none" stroke="#808080" stroke-width="1.100"/><path d="M9.500 2.500A4.900 4.900 0 0 0 2.500 9.500" fill="none" stroke="#404040" stroke-width="1"/><path d="M10.200 1.800A5.900 5.900 0 0 1 1.800 10.200" fill="none" stroke="#fff" stroke-width="1.100"/><path d="M9.500 2.500A4.900 4.900 0 0 1 2.500 9.500" fill="none" stroke="#d5d3ce" stroke-width="1"/><circle cx="6" cy="6" r="2" fill="#000"/></svg>
<div class="ms" style="left:410px;top:258px;transform:scaleX(0.86)">Even</div>
<svg class="rad" style="left:392px;top:276px" viewBox="0 0 12 12"><circle cx="6" cy="6" r="5" fill="#fff"/><path d="M10.200 1.800A5.900 5.900 0 0 0 1.800 10.200" fill="none" stroke="#808080" stroke-width="1.100"/><path d="M9.500 2.500A4.900 4.900 0 0 0 2.500 9.500" fill="none" stroke="#404040" stroke-width="1"/><path d="M10.200 1.800A5.900 5.900 0 0 1 1.800 10.200" fill="none" stroke="#fff" stroke-width="1.100"/><path d="M9.500 2.500A4.900 4.900 0 0 1 2.500 9.500" fill="none" stroke="#d5d3ce" stroke-width="1"/></svg>
<div class="ms" style="left:410px;top:276px;transform:scaleX(0.86)">Odd</div>
<svg class="rad" style="left:392px;top:294px" viewBox="0 0 12 12"><circle cx="6" cy="6" r="5" fill="#fff"/><path d="M10.200 1.800A5.900 5.900 0 0 0 1.800 10.200" fill="none" stroke="#808080" stroke-width="1.100"/><path d="M9.500 2.500A4.900 4.900 0 0 0 2.500 9.500" fill="none" stroke="#404040" stroke-width="1"/><path d="M10.200 1.800A5.900 5.900 0 0 1 1.800 10.200" fill="none" stroke="#fff" stroke-width="1.100"/><path d="M9.500 2.500A4.900 4.900 0 0 1 2.500 9.500" fill="none" stroke="#d5d3ce" stroke-width="1"/></svg>
<div class="ms" style="left:410px;top:294px;transform:scaleX(0.86)">User</div>
<div class="ms" style="left:501px;top:222px;transform:scaleX(0.841)">Stopbits:</div>
<svg class="rad" style="left:501px;top:240px" viewBox="0 0 12 12"><circle cx="6" cy="6" r="5" fill="#fff"/><path d="M10.200 1.800A5.900 5.900 0 0 0 1.800 10.200" fill="none" stroke="#808080" stroke-width="1.100"/><path d="M9.500 2.500A4.900 4.900 0 0 0 2.500 9.500" fill="none" stroke="#404040" stroke-width="1"/><path d="M10.200 1.800A5.900 5.900 0 0 1 1.800 10.200" fill="none" stroke="#fff" stroke-width="1.100"/><path d="M9.500 2.500A4.900 4.900 0 0 1 2.500 9.500" fill="none" stroke="#d5d3ce" stroke-width="1"/><circle cx="6" cy="6" r="2" fill="#000"/></svg>
<div class="ms" style="left:519px;top:240px;transform:scaleX(0.86)">1</div>
<svg class="rad" style="left:501px;top:257px" viewBox="0 0 12 12"><circle cx="6" cy="6" r="5" fill="#fff"/><path d="M10.200 1.800A5.900 5.900 0 0 0 1.800 10.200" fill="none" stroke="#808080" stroke-width="1.100"/><path d="M9.500 2.500A4.900 4.900 0 0 0 2.500 9.500" fill="none" stroke="#404040" stroke-width="1"/><path d="M10.200 1.800A5.900 5.900 0 0 1 1.800 10.200" fill="none" stroke="#fff" stroke-width="1.100"/><path d="M9.500 2.500A4.900 4.900 0 0 1 2.500 9.500" fill="none" stroke="#d5d3ce" stroke-width="1"/></svg>
<div class="ms" style="left:519px;top:256px;transform:scaleX(0.86)">2</div>
<div class="ms" style="left:501px;top:282px;transform:scaleX(0.875)">RS Type:</div>
<svg class="rad" style="left:501px;top:300px" viewBox="0 0 12 12"><circle cx="6" cy="6" r="5" fill="#fff"/><path d="M10.200 1.800A5.900 5.900 0 0 0 1.800 10.200" fill="none" stroke="#808080" stroke-width="1.100"/><path d="M9.500 2.500A4.900 4.900 0 0 0 2.500 9.500" fill="none" stroke="#404040" stroke-width="1"/><path d="M10.200 1.800A5.900 5.900 0 0 1 1.800 10.200" fill="none" stroke="#fff" stroke-width="1.100"/><path d="M9.500 2.500A4.900 4.900 0 0 1 2.500 9.500" fill="none" stroke="#d5d3ce" stroke-width="1"/><circle cx="6" cy="6" r="2" fill="#000"/></svg>
<div class="ms" style="left:519px;top:300px;transform:scaleX(0.88)">RS232</div>
<svg class="rad" style="left:501px;top:318px" viewBox="0 0 12 12"><circle cx="6" cy="6" r="5" fill="#fff"/><path d="M10.200 1.800A5.900 5.900 0 0 0 1.800 10.200" fill="none" stroke="#808080" stroke-width="1.100"/><path d="M9.500 2.500A4.900 4.900 0 0 0 2.500 9.500" fill="none" stroke="#404040" stroke-width="1"/><path d="M10.200 1.800A5.900 5.900 0 0 1 1.800 10.200" fill="none" stroke="#fff" stroke-width="1.100"/><path d="M9.500 2.500A4.900 4.900 0 0 1 2.500 9.500" fill="none" stroke="#d5d3ce" stroke-width="1"/></svg>
<div class="ms" style="left:519px;top:318px;transform:scaleX(0.88)">RS485</div>
<div class="ms" style="left:588px;top:282px;transform:scaleX(0.845)">Databits:</div>
<div class="sunk cb" style="left:587px;top:300px;width:86px"><i></i></div>
<div class="btn2" style="left:655px;top:302px;width:16px;height:17px"><i></i></div>
<svg class="a" style="left:659px;top:308px" width="9" height="6" viewBox="0 0 9 6"><path d="M0 0h7l-3.500 4z" fill="#000"/></svg>
<div class="ms" style="left:592px;top:304px;transform:scaleX(0.86)">8</div>
<div class="hl" style="left:253px;top:351px;width:7px"></div>
<div class="hl" style="left:566px;top:351px;width:131px"></div>
<div class="hl" style="left:253px;top:425px;width:444px"></div>
<div class="vl" style="left:253px;top:351px;height:76px"></div>
<div class="vl" style="left:695px;top:351px;height:76px"></div>
<svg class="rad" style="left:267px;top:346px" viewBox="0 0 12 12"><circle cx="6" cy="6" r="5" fill="#fff"/><path d="M10.200 1.800A5.900 5.900 0 0 0 1.800 10.200" fill="none" stroke="#808080" stroke-width="1.100"/><path d="M9.500 2.500A4.900 4.900 0 0 0 2.500 9.500" fill="none" stroke="#404040" stroke-width="1"/><path d="M10.200 1.800A5.900 5.900 0 0 1 1.800 10.200" fill="none" stroke="#fff" stroke-width="1.100"/><path d="M9.500 2.500A4.900 4.900 0 0 1 2.500 9.500" fill="none" stroke="#d5d3ce" stroke-width="1"/></svg>
<div class="ms" style="left:285px;top:346px;transform:scaleX(0.876)">UPS Mode (uninterruptible power source)</div>
<div class="chk d" style="left:266px;top:372px"><i></i></div>
<div class="ms dis" style="left:285px;top:372px;transform:scaleX(0.874)">Enable Automatic System Shutdown</div>
<div class="ms dis" style="left:285px;top:396px;transform:scaleX(0.854)">Wait Time (s):</div>
<div class="sunk cb d" style="left:397px;top:393px;width:56px;height:20px"><i></i></div>
<div class="btn2" style="left:436px;top:395px;width:15px;height:8px"><i></i></div>
<div class="btn2" style="left:436px;top:403px;width:15px;height:8px"><i></i></div>
<svg class="a" style="left:441px;top:397px" width="6" height="4" viewBox="0 0 6 4"><path d="M1 3.500h5L3.500 1z" fill="#fff"/><path d="M0 3h5L2.500 .5z" fill="#808080"/></svg>
<svg class="a" style="left:441px;top:405px" width="6" height="4" viewBox="0 0 6 4"><path d="M1 1h5L3.500 3.500z" fill="#fff"/><path d="M0 .5h5L2.500 3z" fill="#808080"/></svg>
<div class="ms dis" style="left:401px;top:396px;transform:scaleX(0.86)">60</div>
<div class="chk d" style="left:472px;top:397px"><i></i></div>
<div class="ms dis" style="left:491px;top:397px;transform:scaleX(0.874)">No Abort</div>
<div class="ms dis" style="left:512px;top:372px;transform:scaleX(0.856)">Pin Layout:</div>
<div class="sunk cb d" style="left:587px;top:368px;width:86px"><i></i></div>
<div class="btn2" style="left:655px;top:370px;width:16px;height:17px"><i></i></div>
<svg class="a" style="left:659px;top:376px" width="9" height="6" viewBox="0 0 9 6"><path d="M1 1h7l-3.500 4z" fill="#fff"/><path d="M0 0h7l-3.500 4z" fill="#808080"/></svg>
<div class="ms dis" style="left:592px;top:372px;transform:scaleX(0.86)">APC</div>
<div class="chk d" style="left:562px;top:397px"><i></i></div>
<div class="ms dis" style="left:581px;top:397px;transform:scaleX(0.871)">Delayed (NT4 only)</div>
<div class="sunk" style="left:230px;top:464px;width:501px;height:38px"><i></i></div>
<div class="a" style="left:232px;top:466px;width:99px;height:16px;border:1px solid;border-color:#fff #404040 #404040 #fff;overflow:hidden"><i class="a" style="left:0;top:0;right:0;bottom:0;border:1px solid;border-color:#d5d3ce #808080 #808080 #d5d3ce"></i><div class="th" style="left:4px;top:1px;transform-origin:0 0;transform:scaleX(0.92)">Number</div></div>
<div class="a" style="left:331px;top:466px;width:151px;height:16px;border:1px solid;border-color:#fff #404040 #404040 #fff;overflow:hidden"><i class="a" style="left:0;top:0;right:0;bottom:0;border:1px solid;border-color:#d5d3ce #808080 #808080 #d5d3ce"></i><div class="th" style="left:4.5px;top:1px;transform-origin:0 0;transform:scaleX(0.96)">Box Name</div></div>
<div class="a" style="left:482px;top:466px;width:59px;height:16px;border:1px solid;border-color:#fff #404040 #404040 #fff;overflow:hidden"><i class="a" style="left:0;top:0;right:0;bottom:0;border:1px solid;border-color:#d5d3ce #808080 #808080 #d5d3ce"></i><div class="th" style="left:4.5px;top:1px;transform-origin:0 0;transform:scaleX(1)">Address</div></div>
<div class="a" style="left:541px;top:466px;width:121px;height:16px;border:1px solid;border-color:#fff #404040 #404040 #fff;overflow:hidden"><i class="a" style="left:0;top:0;right:0;bottom:0;border:1px solid;border-color:#d5d3ce #808080 #808080 #d5d3ce"></i><div class="th" style="left:6px;top:1px;transform-origin:0 0;transform:scaleX(1)">Type</div></div>
<div class="a" style="left:662px;top:466px;width:60px;height:16px;border:1px solid;border-color:#fff #404040 #404040 #fff;overflow:hidden"><i class="a" style="left:0;top:0;right:0;bottom:0;border:1px solid;border-color:#d5d3ce #808080 #808080 #d5d3ce"></i><div class="th" style="left:4px;top:1px;transform-origin:0 0;transform:scaleX(1)">In Size</div></div>
<div class="a" style="left:722px;top:466px;width:7px;height:16px;border:1px solid;border-color:#fff #d5d3ce #404040 #fff;overflow:hidden"><div class="th" style="left:3px;top:1px">O</div></div>
<div class="a" style="left:232px;top:482px;width:497px;height:17px;background-image:repeating-conic-gradient(#fff 0 25%,#d5d3ce 0 50%);background-size:2px 2px"></div>
<div class="btn2" style="left:232px;top:482px;width:16px;height:17px"><i></i><svg class="a" style="left:4px;top:4px" width="4" height="7" viewBox="0 0 4 7"><path d="M4 0v7L0 3.500z" fill="#000"/></svg></div>
<div class="btn2" style="left:248px;top:482px;width:420px;height:17px"><i></i></div>
<div class="btn2" style="left:713px;top:482px;width:16px;height:17px"><i></i><svg class="a" style="left:5px;top:4px" width="4" height="7" viewBox="0 0 4 7"><path d="M0 0v7l4-3.500z" fill="#000"/></svg></div>
<div class="a" style="left:4px;top:506px;width:727px;height:1px;background:#404040"></div>
<div class="th" style="left:6px;top:511px">Ready</div>
<div class="a" style="left:502px;top:509px;width:142px;height:15px;background:#ff0000"></div>
<div class="th" style="left:505px;top:510px;color:#fff;letter-spacing:.08px">CX_003524 (5.0.53.36.1.1)</div>
<div class="a" style="left:648px;top:509px;width:64px;height:15px;background:#ffff00"></div>
<div class="th" style="left:660px;top:510px;transform-origin:0 0;transform:scaleX(.94)">Timeout</div>
<svg class="a" style="left:718px;top:512px" width="13" height="13" viewBox="0 0 13 13"><path d="M12 1L1 12M12 5L5 12M12 9L9 12" stroke="#808080" stroke-width="1.600"/><path d="M12 0L0 12M12 4L4 12M12 8L8 12" stroke="#fff" stroke-width="1"/></svg>
</body></html>
